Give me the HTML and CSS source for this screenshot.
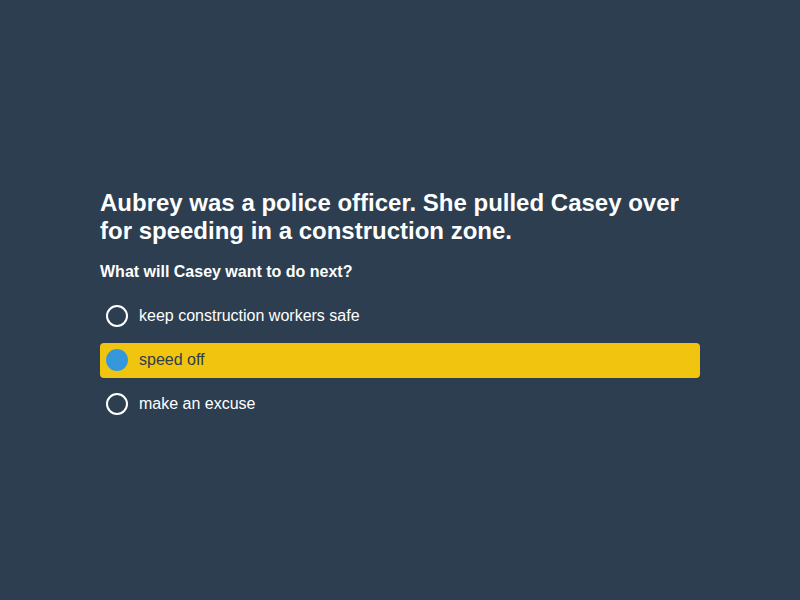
FILE: index.html
```html
<!DOCTYPE html>
<html>
<head>
<meta charset="utf-8">
<link rel="stylesheet" href="styles.css">
</head>
<body>
<main class="page">
  <section class="quiz">
    <h1 class="story">Aubrey was a police officer. She pulled Casey over for speeding in a construction zone.</h1>
    <p class="question">What will Casey want to do next?</p>
    <div class="options">
      <div class="option"><span class="radio"></span><span class="label">keep construction workers safe</span></div>
      <div class="option selected"><span class="radio"></span><span class="label">speed off</span></div>
      <div class="option"><span class="radio"></span><span class="label">make an excuse</span></div>
    </div>
  </section>
</main>
</body>
</html>
```
FILE: styles.css
```css
html, body {
  margin: 0;
  padding: 0;
  background: #2c3e50;
}
body {
  font-family: "Liberation Sans", Arial, sans-serif;
  color: #ffffff;
}
.page {
  height: 600px;
  box-sizing: border-box;
  padding-top: 10px;
  display: flex;
  align-items: center;
  justify-content: center;
}
.quiz {
  width: 600px;
}
.story {
  margin: 0;
  font-size: 24px;
  line-height: 28px;
  font-weight: bold;
}
.question {
  margin: 17px 0 17px;
  font-size: 16px;
  line-height: 20px;
  font-weight: bold;
}
.options {
  display: flex;
  flex-direction: column;
  gap: 9px;
}
.option {
  display: flex;
  align-items: center;
  height: 35px;
  padding-left: 6px;
  border-radius: 4px;
  box-sizing: border-box;
}
.radio {
  width: 22px;
  height: 22px;
  border: 2px solid #ffffff;
  border-radius: 50%;
  box-sizing: border-box;
  flex-shrink: 0;
}
.label {
  margin-left: 11px;
  font-size: 16px;
}
.option.selected {
  background: #f1c40f;
  color: #2c3e50;
}
.option.selected .radio {
  border-color: #3498db;
  background: #3498db;
}
```
